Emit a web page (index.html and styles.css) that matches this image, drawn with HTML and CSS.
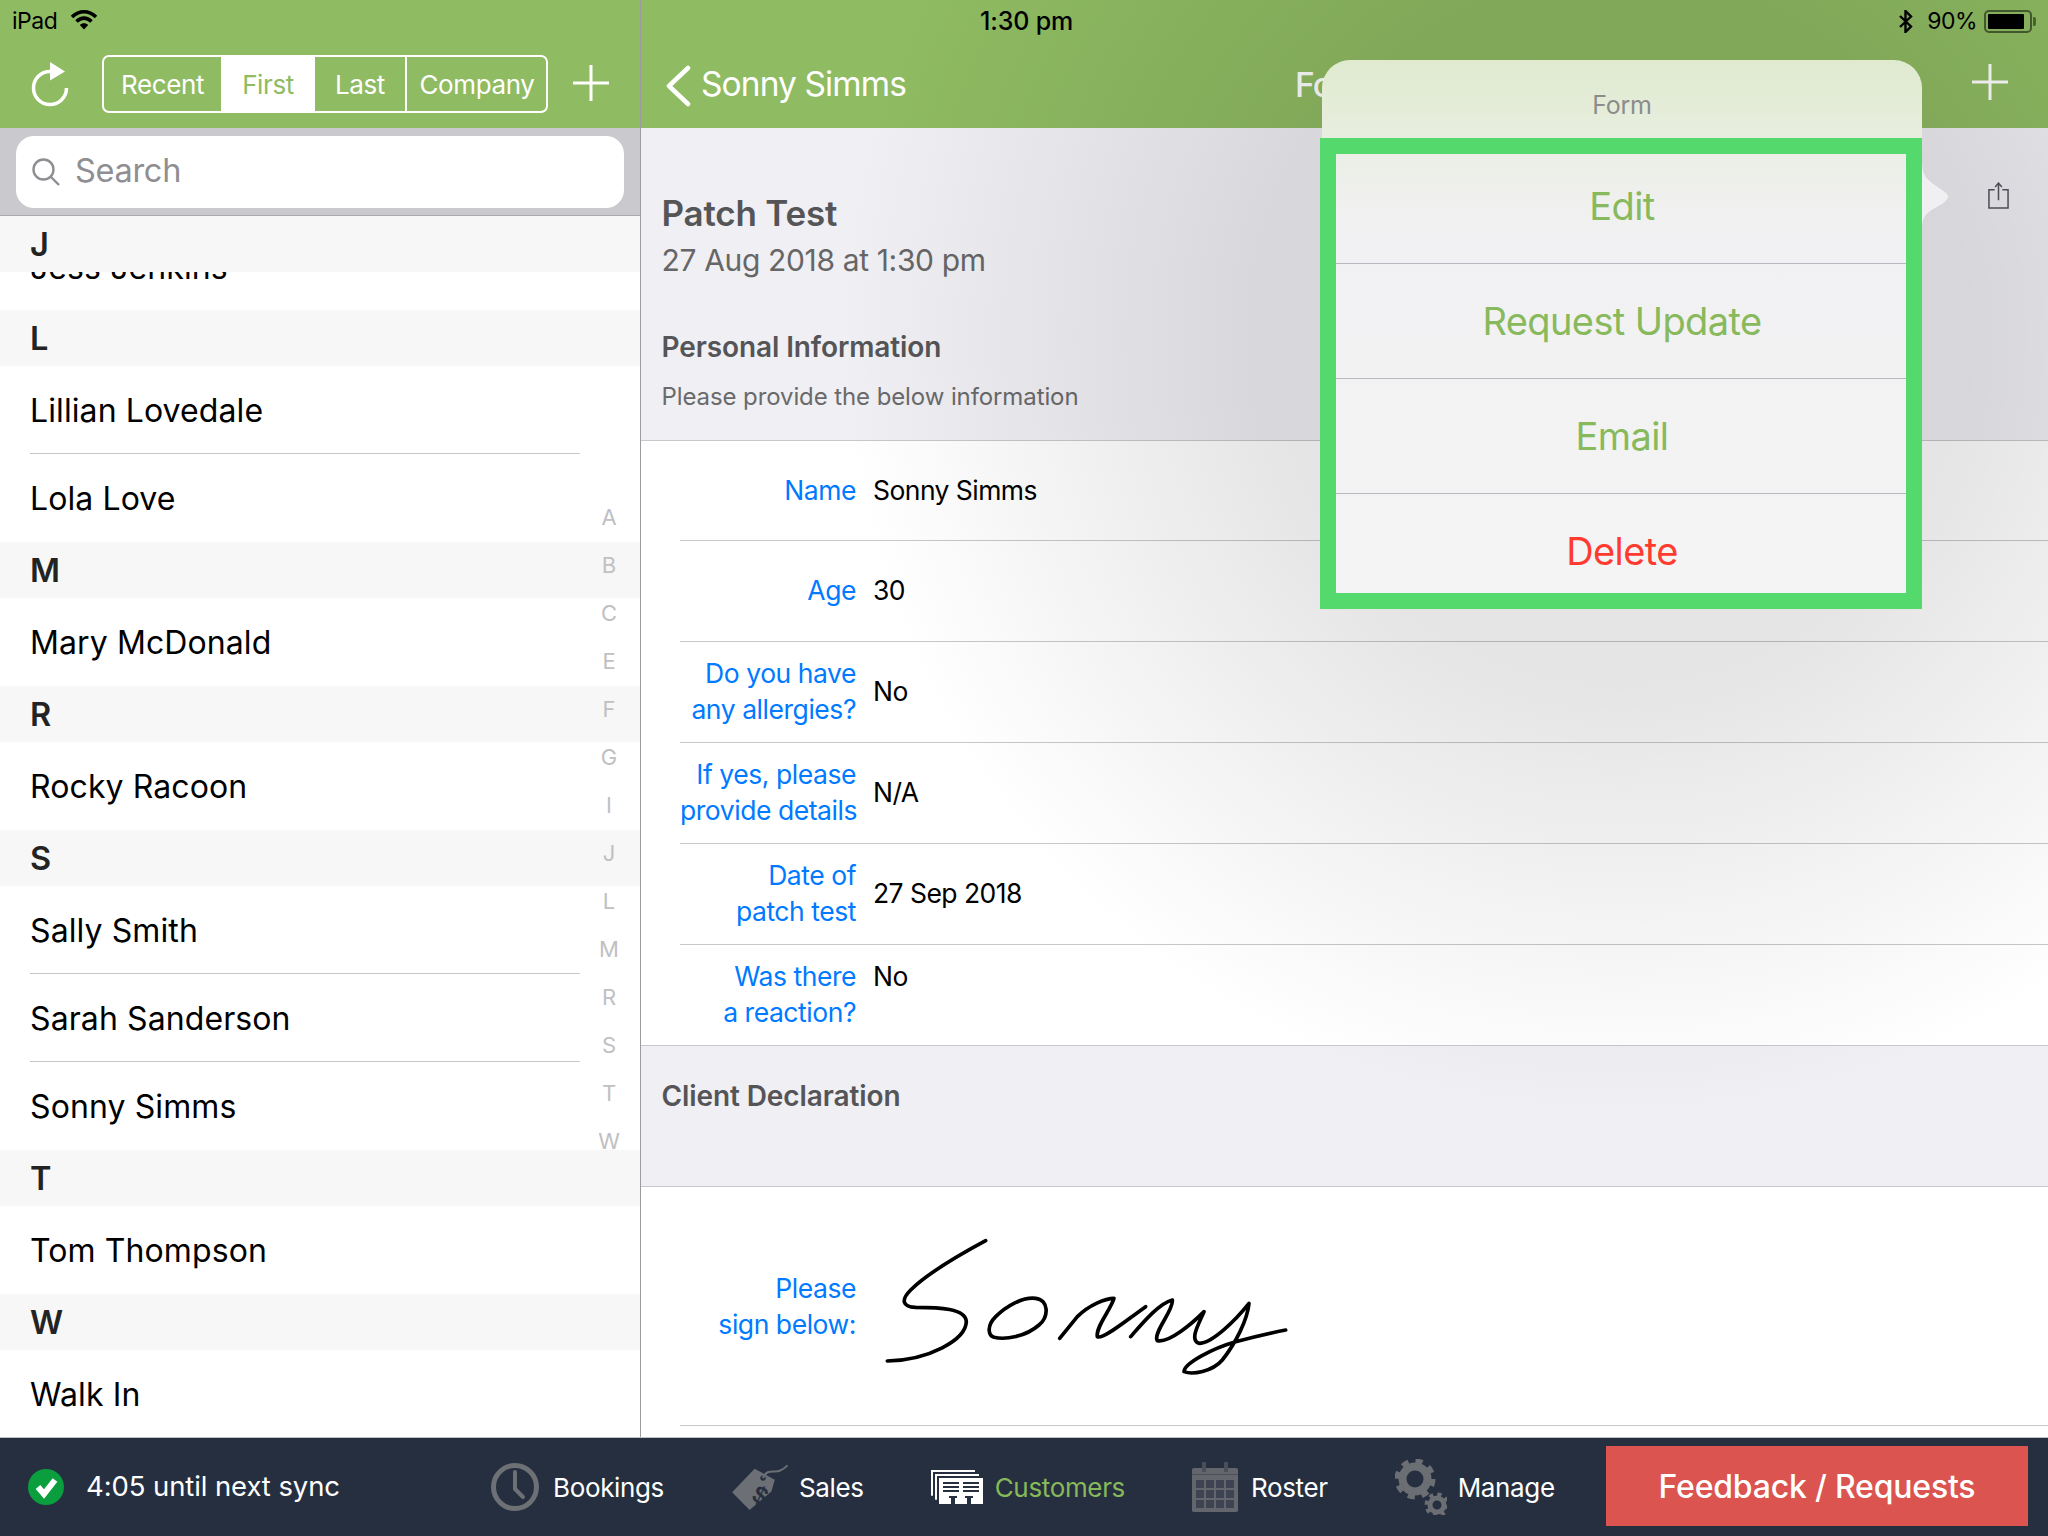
FILE: index.html
```html
<!DOCTYPE html>
<html lang="en">
<head>
<meta charset="utf-8">
<title>Customers</title>
<link rel="stylesheet" href="styles.css">
</head>
<body>
<div class="app">
  <div class="main">
    <aside class="sidebar">
      <div class="status">
        <span>iPad</span>
        <svg class="wifi" viewBox="0 0 28 21"><path d="M2 8 C9 1 19 1 26 8" /><path d="M6.5 12.5 C11 8 17 8 21.5 12.5" /><path d="M14 20.5 L9.8 16 C12 13.8 16 13.8 18.2 16 Z" class="fill"/></svg>
      </div>
      <div class="side-nav">
        <svg class="refresh" viewBox="0 0 40 46"><path d="M20 9.5 A16.5 16.5 0 1 0 36.5 26" /><path class="fill" d="M20 0 L35 9.5 L20 18.5 Z"/></svg>
        <div class="segments">
          <span class="seg seg-recent">Recent</span>
          <span class="seg seg-first">First</span>
          <span class="seg seg-last">Last</span>
          <span class="seg seg-company">Company</span>
        </div>
        <svg class="plus side-plus" viewBox="0 0 36 36"><path d="M18 0 V36 M0 18 H36"/></svg>
      </div>
      <div class="search-band">
        <div class="search">
          <svg class="lens" viewBox="0 0 28 28"><circle cx="11.5" cy="11.5" r="10"/><path d="M18.5 18.5 L27 27"/></svg>
          <span class="search-text">Search</span>
        </div>
      </div>
      <div class="list">
        <div class="letter letter-pinned">J</div>
        <div class="row row-clipped"><span>Jess Jenkins</span></div>
        <div class="letter">L</div>
        <div class="row"><span>Lillian Lovedale</span></div>
        <div class="row"><span>Lola Love</span></div>
        <div class="letter">M</div>
        <div class="row"><span>Mary McDonald</span></div>
        <div class="letter">R</div>
        <div class="row"><span>Rocky Racoon</span></div>
        <div class="letter">S</div>
        <div class="row"><span>Sally Smith</span></div>
        <div class="row"><span>Sarah Sanderson</span></div>
        <div class="row"><span>Sonny Simms</span></div>
        <div class="letter">T</div>
        <div class="row"><span>Tom Thompson</span></div>
        <div class="letter">W</div>
        <div class="row"><span>Walk In</span></div>
        <div class="index">
          <span>A</span><span>B</span><span>C</span><span>E</span><span>F</span><span>G</span><span>I</span><span>J</span><span>L</span><span>M</span><span>R</span><span>S</span><span>T</span><span>W</span>
        </div>
      </div>
    </aside>
    <section class="detail">
      <div class="status status-detail">
        <span class="time">1:30 pm</span>
        <svg class="bt" viewBox="0 0 14 23"><path d="M1 6 L12 16.5 L6.5 22 V1 L12 6.5 L1 17"/></svg>
        <span class="pct">90%</span>
        <span class="battery"><span class="battery-fill"></span></span>
        <span class="battery-nub"></span>
      </div>
      <div class="detail-nav">
        <svg class="chevron" viewBox="0 0 26 42"><path d="M23 3 L4 21 L23 39"/></svg>
        <span class="back-name">Sonny Simms</span>
        <span class="nav-title">Form</span>
        <svg class="plus detail-plus" viewBox="0 0 36 36"><path d="M18 0 V36 M0 18 H36"/></svg>
      </div>
      <div class="intro">
        <h1>Patch Test</h1>
        <p class="date">27 Aug 2018 at 1:30 pm</p>
        <h2>Personal Information</h2>
        <p class="note">Please provide the below information</p>
        <svg class="share" viewBox="0 0 22 28"><path d="M7 8 H1 V27 H21 V8 H15"/><path d="M11 19 V1 M7.5 5 L11 1 L14.5 5"/></svg>
      </div>
      <div class="fields">
        <div class="field"><div class="f-label">Name</div><div class="f-value">Sonny Simms</div></div>
        <div class="field"><div class="f-label">Age</div><div class="f-value">30</div></div>
        <div class="field"><div class="f-label">Do you have<br>any allergies?</div><div class="f-value">No</div></div>
        <div class="field"><div class="f-label">If yes, please<br>provide details</div><div class="f-value">N/A</div></div>
        <div class="field"><div class="f-label">Date of<br>patch test</div><div class="f-value">27 Sep 2018</div></div>
        <div class="field field-last"><div class="f-label">Was there<br>a reaction?</div><div class="f-value f-top">No</div></div>
      </div>
      <div class="declaration"><h2>Client Declaration</h2></div>
      <div class="sign">
        <div class="sign-row">
          <div class="f-label sign-label">Please<br>sign below:</div>
          <svg class="signature" viewBox="0 0 1440 660"><path d="M380 122 C300 165 200 225 155 270 C125 300 130 320 170 322 C240 322 320 325 322 365 C320 420 210 480 85 483"/><path d="M410 350 C440 320 490 290 530 295 C570 300 570 350 540 375 C500 410 440 420 405 412 C385 405 385 375 410 350"/><path d="M602 415 L655 350 C690 315 740 295 765 295 C755 330 710 380 715 410 C730 420 790 370 860 320"/><path d="M815 410 C850 370 900 310 940 300 C945 330 880 400 895 422 C930 430 1000 370 1035 335 C1020 370 990 420 1020 430 C1060 430 1130 360 1170 310 C1165 360 1130 430 1090 480 C1060 515 1000 525 975 515 C975 490 1060 445 1130 425 C1180 412 1230 400 1280 390"/></svg>
        </div>
      </div>
      <div class="dim"></div>
    </section>
  </div>

  <footer class="bar">
    <div class="sync">
      <svg class="check" viewBox="0 0 36 36"><circle cx="18" cy="18" r="18"/><path d="M10 18 L16 25 L27 11"/></svg>
      <span>4:05 until next sync</span>
    </div>
    <nav class="tabs">
      <div class="tab">
        <svg class="ico-clock" viewBox="0 0 48 48"><circle cx="24" cy="24" r="21.5"/><path d="M24 9 V26 L32 34"/></svg>
        <span>Bookings</span>
      </div>
      <div class="tab tab-sales">
        <svg class="ico-tag" viewBox="30 28 172 140"><path class="tag-string" d="M125 70 C135 40 160 55 175 48 C185 44 190 40 198 32"/><path class="tag-body" fill-rule="evenodd" d="M33 112 L100 42 L160 75 L150 110 L85 165 Z M117 70 a8 8 0 1 0 16 0 a8 8 0 1 0 -16 0 Z"/><text class="tag-dollar" x="0" y="0" transform="translate(88 135) rotate(25)">$</text></svg>
        <span>Sales</span>
      </div>
      <div class="tab tab-active">
        <svg class="ico-cust" viewBox="33 63 156 102"><path class="cust-line" d="M36 140 V66 H165"/><path class="cust-line" d="M48 152 V78 H177"/><path class="cust-card" d="M57 87 H189 V165 H57 Z"/><path class="cust-ink" d="M69 99 H117 V105 H69 Z M129 99 H177 V105 H129 Z M69 111 H117 V117 H69 Z M129 111 H177 V117 H129 Z M69 123 H117 V129 H69 Z M129 123 H177 V129 H129 Z M87 141 H111 V147 H105 V165 H93 V147 H87 Z M135 141 H159 V147 H153 V165 H141 V147 H135 Z"/></svg>
        <span>Customers</span>
      </div>
      <div class="tab tab-roster">
        <svg class="ico-cal" viewBox="819 39 138 150">
          <rect class="cal-body" x="819" y="57" width="138" height="132" rx="5"/>
          <rect class="cal-peg" x="849" y="39" width="12" height="30" rx="3"/>
          <rect class="cal-peg" x="915" y="39" width="12" height="30" rx="3"/>
          <rect class="cal-peg" x="819" y="75" width="138" height="3"/>
          <rect class="cal-cell" x="831" y="93" width="24" height="24"/><rect class="cal-cell" x="861" y="93" width="24" height="24"/><rect class="cal-cell" x="891" y="93" width="24" height="24"/><rect class="cal-cell" x="921" y="93" width="24" height="24"/>
          <rect class="cal-cell" x="831" y="123" width="24" height="24"/><rect class="cal-cell" x="861" y="123" width="24" height="24"/><rect class="cal-cell" x="891" y="123" width="24" height="24"/><rect class="cal-cell" x="921" y="123" width="24" height="24"/>
          <rect class="cal-cell" x="831" y="153" width="24" height="24"/><rect class="cal-cell" x="861" y="153" width="24" height="24"/><rect class="cal-cell" x="891" y="153" width="24" height="24"/><rect class="cal-cell" x="921" y="153" width="24" height="24"/>
        </svg>
        <span>Roster</span>
      </div>
      <div class="tab tab-manage">
        <svg class="ico-gear" viewBox="0 0 52 56">
          <circle class="gear-ring big" cx="20" cy="20" r="12.5"/>
          <circle class="gear-teeth big-teeth" cx="20" cy="20" r="17.5"/>
          <circle class="gear-ring small" cx="42" cy="46" r="7"/>
          <circle class="gear-teeth small-teeth" cx="42" cy="46" r="10.5"/>
        </svg>
        <span>Manage</span>
      </div>
    </nav>
    <button class="feedback" type="button">Feedback / Requests</button>
  </footer>

  <div class="popover">
    <svg class="pop-arrow" viewBox="0 0 28 70"><path d="M0 0 C0 18 6 20 20 30 C28 35 28 38 20 44 C6 52 0 54 0 70 Z"/></svg>
    <div class="pop-title">Form</div>
    <div class="pop-row">Edit</div>
    <div class="pop-row">Request Update</div>
    <div class="pop-row">Email</div>
    <div class="pop-row pop-danger">Delete</div>
    <div class="pop-frame"></div>
  </div>
</div>
</body>
</html>
```

FILE: styles.css
```css
* { box-sizing: border-box; }
html, body { margin: 0; padding: 0; }
body { width: 2048px; height: 1536px; overflow: hidden; font-family: Inter, "Liberation Sans", sans-serif; background: #fff; color: #000; }
.app { position: relative; width: 2048px; height: 1536px; display: flex; flex-direction: column; overflow: hidden; }
.main { display: flex; height: 1438px; border-bottom: 1px solid #c0c0c0; }

/* sidebar */
.sidebar { width: 641px; display: flex; flex-direction: column; border-right: 1px solid #9b9ba0; }
.status { height: 42px; display: flex; align-items: center; background: #8fbb62; font-size: 23px; letter-spacing: -0.5px; padding-left: 12px; }
.wifi { width: 28px; height: 21px; margin-left: 13px; margin-top: -3px; }
.wifi path { fill: none; stroke: #000; stroke-width: 3.6; }
.wifi .fill { fill: #000; stroke: none; }
.side-nav { height: 86px; background: #8fbb62; display: flex; align-items: flex-start; }
.refresh { width: 40px; height: 46px; margin: 20px 0 0 30px; }
.refresh path { fill: none; stroke: #fff; stroke-width: 3.5; }
.refresh .fill { fill: #fff; stroke: none; }
.segments { margin: 13px 0 0 32px; width: 446px; height: 58px; display: flex; border: 2px solid #fff; border-radius: 7px; overflow: hidden; color: #fff; font-size: 26px; letter-spacing: -0.4px; }
.seg { display: flex; align-items: center; justify-content: center; }
.seg-recent { width: 117px; }
.seg-first { width: 94px; background: #fff; color: #8fbb62; }
.seg-last { width: 90px; }
.seg-company { flex: 1; border-left: 2px solid #fff; padding-left: 1px; }
.plus path { fill: none; stroke: #fff; stroke-width: 3; }
.plus { width: 36px; height: 36px; }
.side-plus { margin: 23px 0 0 25px; }
.search-band { height: 88px; background: #c9c9ce; padding: 8px 16px 0; border-bottom: 1px solid #a9a9ae; }
.search { height: 72px; background: #fff; border-radius: 18px; display: flex; align-items: center; padding-left: 16px; color: #8e8e93; font-size: 32.5px; letter-spacing: -0.3px; }
.search-text { margin-bottom: 4px; }
.lens { width: 28px; height: 28px; margin-right: 15px; }
.lens circle, .lens path { fill: none; stroke: #8e8e93; stroke-width: 2.4; }
.list { position: relative; flex: 1; overflow: hidden; background: #fff; }
.letter { height: 56px; background: #f7f7f7; display: flex; align-items: center; padding: 1px 0 0 30px; font-size: 32.5px; font-weight: 600; color: #232323; }
.letter-pinned { position: absolute; top: 0; left: 0; right: 0; }
.row { height: 88px; margin-left: 30px; width: 550px; display: flex; align-items: center; padding-top: 1px; font-size: 32px; letter-spacing: 0.1px; border-bottom: 1px solid #c8c8cc; }
.row:has(+ .letter) { border-bottom: 0; }
.row-clipped { height: 94px; padding-top: 8px; }
.index { position: absolute; top: 277px; left: 612px; width: 30px; display: flex; flex-direction: column; align-items: center; margin-left: -18px; font-size: 22px; color: #c0c0c2; }
.index span { height: 48px; display: flex; align-items: center; }

/* detail */
.detail { position: relative; flex: 1; display: flex; flex-direction: column; background: #fff; }
.status-detail { padding-left: 0; }
.time { margin-left: 339px; font-weight: 500; font-size: 25px; letter-spacing: -0.15px; }
.bt { width: 14px; height: 23px; margin-left: auto; }
.bt path { fill: none; stroke: #000; stroke-width: 2.4; }
.pct { margin-left: 14px; }
.battery { width: 48px; height: 23px; margin-left: 7px; border: 2px solid rgba(0,0,0,.5); border-radius: 5px; padding: 2px; display: flex; }
.battery-fill { width: 90%; background: #000; border-radius: 1px; }
.battery-nub { width: 3px; height: 9px; margin-left: 1px; margin-right: 12px; background: rgba(0,0,0,.45); border-radius: 0 2px 2px 0; }
.detail-nav { height: 86px; background: #8fbb62; display: flex; align-items: center; color: #fff; font-size: 33.5px; letter-spacing: -0.9px; }
.chevron { width: 26px; height: 42px; margin-left: 24px; margin-top: 1px; }
.chevron path { fill: none; stroke: #fff; stroke-width: 4.5; stroke-linecap: round; stroke-linejoin: round; }
.back-name { margin: -2px 0 0 10px; width: 594px; }
.nav-title { font-weight: 500; }
.detail-plus { margin-left: auto; margin-right: 40px; margin-top: -6px; }
.intro { position: relative; height: 313px; background: #efeff4; border-bottom: 1px solid #c8c8cc; padding: 64px 0 0 20.5px; color: #5a5a5e; }
.intro h1 { margin: 0; font-size: 35px; line-height: 42px; font-weight: 600; letter-spacing: -0.2px; color: #555558; }
.date { margin: 8px 0 0; font-size: 30px; line-height: 36px; letter-spacing: -0.35px; color: #666; }
.intro h2, .declaration h2 { font-size: 28px; line-height: 36px; font-weight: 600; letter-spacing: -0.1px; color: #555558; margin: 51px 0 0; }
.note { margin: 16px 0 0; font-size: 24px; line-height: 32px; color: #6a6a6a; letter-spacing: -0.1px; }
.share { position: absolute; left: 1347px; top: 54px; width: 21px; height: 27px; }
.share path { fill: none; stroke: #55555c; stroke-width: 1.6; }
.fields { padding-left: 39px; }
.field { height: 101px; display: flex; align-items: center; padding-bottom: 2px; border-bottom: 1px solid #c8c8cc; font-size: 26.5px; line-height: 36px; }
.field:first-child { height: 100px; }
.f-label { width: 176px; text-align: right; color: #007aff; white-space: nowrap; letter-spacing: -0.45px; }
.f-value { margin-left: 17px; letter-spacing: -0.55px; }
.f-top { align-self: flex-start; padding-top: 13px; }
.field-last { border-bottom: 0; height: 100px; }
.declaration { height: 142px; background: #efeff4; border-top: 1px solid #c8c8cc; border-bottom: 1px solid #c8c8cc; padding: 32px 0 0 20.5px; }
.declaration h2 { margin: 0; }
.sign { flex: 1; padding-left: 39px; }
.sign-row { height: 239px; display: flex; border-bottom: 1px solid #c8c8cc; align-items: center; font-size: 26.5px; line-height: 36px; }
.sign-label { margin-top: 0; }
.signature { width: 480px; height: 220px; margin-left: 3px; align-self: flex-start; margin-top: 13px; }
.signature path { fill: none; stroke: #000; stroke-width: 11; stroke-linecap: round; stroke-linejoin: round; }
.dim { position: absolute; inset: 0; pointer-events: none; background: radial-gradient(circle at 979px 335px, rgba(0,0,0,.1) 0, rgba(0,0,0,.1) 350px, rgba(0,0,0,0) 780px); }

/* bottom bar */
.bar { height: 98px; background: #262f3f; color: #fff; display: flex; align-items: center; position: relative; font-size: 26px; }
.sync { width: 491px; padding-left: 28px; display: flex; align-items: center; font-size: 27.5px; letter-spacing: -0.1px; }
.sync span { margin: -2px 0 0 22px; }
.check { width: 36px; height: 36px; }
.check circle { fill: #0a9e3f; }
.check path { fill: none; stroke: #fff; stroke-width: 6; }
.tabs { display: flex; align-items: center; gap: 67px; }
.tab { display: flex; align-items: center; gap: 14px; letter-spacing: -0.35px; }
.tab-sales { gap: 10px; }
.tab-active { color: #87b85a; gap: 12px; }
.tab-roster { gap: 13px; }
.tab-manage { gap: 11px; }
.ico-clock { width: 48px; height: 48px; }
.ico-clock circle { fill: none; stroke: #6d7074; stroke-width: 5; }
.ico-clock path { fill: none; stroke: #6d7074; stroke-width: 4; stroke-linecap: round; stroke-linejoin: round; }
.ico-tag { width: 58px; height: 47px; }
.tag-body { fill: #6c6f75; }
.tag-string { fill: none; stroke: #6c6f75; stroke-width: 6; }
.tag-dollar { fill: #262f3f; font-size: 74px; font-weight: 700; font-family: "Liberation Sans", sans-serif; }
.ico-cust { width: 52px; height: 34px; }
.cust-line { fill: none; stroke: #fff; stroke-width: 6; }
.cust-card { fill: #fff; }
.cust-ink { fill: #262f3f; }
.ico-cal { width: 46px; height: 50px; }
.cal-body { fill: #63666d; }
.cal-peg { fill: #4b4f58; }
.cal-cell { fill: #3d4350; }
.ico-gear { width: 52px; height: 56px; }
.gear-ring { fill: none; stroke: #6b6e72; }
.big { stroke-width: 8; }
.small { stroke-width: 5; }
.gear-teeth { fill: none; stroke: #6b6e72; }
.big-teeth { stroke-width: 6; stroke-dasharray: 6.9 6.84; }
.small-teeth { stroke-width: 4; stroke-dasharray: 4.1 4.15; }
.feedback { position: absolute; right: 20px; top: 8px; width: 422px; height: 80px; border: 0; background: #db544f; color: #fff; font: 500 32px Inter, "Liberation Sans", sans-serif; letter-spacing: -0.2px; }

/* popover */
.popover { position: absolute; left: 1322px; top: 60px; width: 600px; height: 548px; border-radius: 28px 28px 0 0; background: linear-gradient(180deg, #dfeacf 0, #e8eedf 14%, #ecefe8 18%, #eff0ed 24%, #f1f1f3 32%, #f4f4f4 100%); display: flex; flex-direction: column; }
.pop-arrow { position: absolute; left: 600px; top: 100px; width: 28px; height: 70px; }
.pop-arrow path { fill: #f0f0f2; }
.pop-title { height: 89px; padding-top: 28px; line-height: 34px; text-align: center; font-size: 25px; color: #8c8c8c; letter-spacing: -0.2px; }
.pop-row { height: 115px; display: flex; align-items: center; justify-content: center; font-size: 38px; letter-spacing: -0.6px; color: #88b95c; border-bottom: 1px solid #b8b8c0; }
.pop-danger { color: #ff3b30; border-bottom: 0; height: 114px; }
.pop-frame { position: absolute; left: -2px; top: 78px; right: 0; bottom: -1px; border: 16px solid #54d96c; }
```
